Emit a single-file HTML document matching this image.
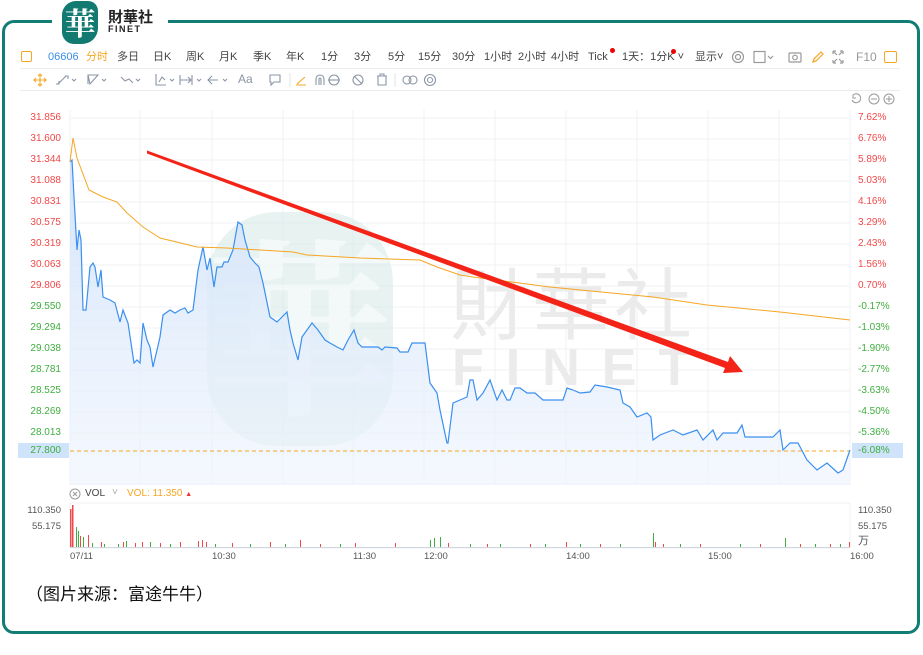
<!DOCTYPE html>
<html><head><meta charset="utf-8"><style>
*{margin:0;padding:0;box-sizing:border-box}
body{width:923px;height:655px;background:#fff;position:relative;overflow:hidden;font-family:"Liberation Sans","Noto Sans CJK SC",sans-serif}
.frame{position:absolute;left:2px;top:20px;width:918px;height:614px;border:3px solid #127d74;border-radius:12px}
.logobg{position:absolute;left:52px;top:10px;width:116px;height:20px;background:#fff}
.icon{position:absolute;left:62px;top:1px;width:36px;height:43px;background:#127a70;border-radius:14px 10px 16px 12px;color:#fff;font:bold 31px "Noto Serif CJK SC",serif;text-align:center;line-height:42px}
.lt1{position:absolute;left:108px;top:8px;font:bold 15px "Noto Sans CJK SC",sans-serif;color:#222;letter-spacing:0px;line-height:17px}
.lt2{position:absolute;left:108px;top:25px;font:bold 9px "Liberation Sans",sans-serif;color:#222;letter-spacing:1.5px;line-height:9px}
.tb{position:absolute;top:50px;font-size:11px;color:#444;white-space:nowrap;line-height:14px}
.sep{position:absolute;left:20px;height:1px;background:#e8ebef}
.lbl{position:absolute;font-size:10px;text-align:right;width:50px;line-height:12px}
.rl{position:absolute;left:858px;font-size:10px;line-height:12px}
.cap{position:absolute;left:26px;top:580px;font:17px "Noto Sans CJK SC",sans-serif;color:#111}
</style></head><body>
<div class="frame"></div>
<div class="logobg"></div>
<div class="icon">華</div>
<div class="lt1">財華社</div>
<div class="lt2">FINET</div>

<div style="position:absolute;left:21px;top:51px;width:11px;height:11px;border:1.5px solid #f5a623;border-radius:2px"></div>
<div class="tb" style="left:48px;color:#3a8ee6">06606</div>
<div class="tb" style="left:86px;color:#f5a623">分时</div>
<div class="tb" style="left:117px">多日</div>
<div class="tb" style="left:153px">日K</div>
<div class="tb" style="left:186px">周K</div>
<div class="tb" style="left:219px">月K</div>
<div class="tb" style="left:253px">季K</div>
<div class="tb" style="left:286px">年K</div>
<div class="tb" style="left:321px">1分</div>
<div class="tb" style="left:354px">3分</div>
<div class="tb" style="left:388px">5分</div>
<div class="tb" style="left:418px">15分</div>
<div class="tb" style="left:452px">30分</div>
<div class="tb" style="left:484px">1小时</div>
<div class="tb" style="left:518px">2小时</div>
<div class="tb" style="left:551px">4小时</div>
<div class="tb" style="left:588px">Tick</div>
<div style="position:absolute;left:610px;top:48px;width:5px;height:5px;border-radius:50%;background:#e00"></div>
<div class="tb" style="left:622px">1天：1分K ˅</div>
<div style="position:absolute;left:671px;top:49px;width:5px;height:5px;border-radius:50%;background:#e00"></div>
<div class="tb" style="left:695px">显示˅</div>
<svg style="position:absolute;left:730px;top:50px" width="150" height="16" fill="none" stroke="#999" stroke-width="1.2">
<circle cx="8" cy="7" r="5.5"/><circle cx="8" cy="7" r="2.5"/>
<rect x="24" y="1.5" width="11" height="11"/><path d="M38 6l2.5 2.5L43 6"/>
<rect x="59" y="3" width="12" height="9" rx="1"/><circle cx="65" cy="7.5" r="2.3"/>
<path d="M83 12l1-3 7-7 2 2-7 7z" stroke="#f5a623"/>
<path d="M103 1h3M103 1v3M113 1h-3M113 1v3M103 13h3M103 13v-3M113 13h-3M113 13v-3M104 2l3 3M112 2l-3 3M104 12l3-3M112 12l-3-3"/>
</svg>
<div class="tb" style="left:856px;color:#999;font-size:12px">F10</div>
<div style="position:absolute;left:884px;top:51px;width:13px;height:12px;border:1.5px solid #f5a623;border-radius:2px"></div>
<div class="sep" style="top:68px;width:880px"></div>

<svg style="position:absolute;left:30px;top:72px" width="420" height="16" fill="none" stroke="#8a95a5" stroke-width="1.1">
<path d="M10 2v12M4 8h12M8 4l2-2 2 2M8 12l2 2 2-2M6 6l-2 2 2 2M14 6l2 2-2 2" stroke="#f5a623"/>
<path d="M28 12l8-8M26 12h3v-3M35 4h3v3"/><path d="M42 7l2 2 2-2"/>
<path d="M58 3l10 0-8 9zM58 3v9"/><path d="M72 7l2 2 2-2"/>
<path d="M91 5l4 4 4-2 4 4"/><path d="M106 7l2 2 2-2"/>
<path d="M126 2v11h10M129 10l3-5 3 3"/><path d="M140 7l2 2 2-2"/>
<path d="M150 3v10M162 3v10M150 8h12M158 5l3 3-3 3"/><path d="M167 7l2 2 2-2"/>
<path d="M178 8h10M182 4l-4 4 4 4"/><path d="M193 7l2 2 2-2"/>
<path d="M240 3h10v7h-6l-3 3v-3h-1z"/>
<path d="M260 1v14" stroke="#e5e5e5"/>
<path d="M267 12l8-7M266 13h10" stroke="#f5a623"/>
<path d="M286 13V7a4 4 0 018 0v6M289 13V7a1 1 0 012 0v6"/>
<circle cx="304" cy="8" r="5"/><path d="M298 8h12"/>
<circle cx="328" cy="8" r="5"/><path d="M324 4l8 8"/>
<path d="M347 4h10M350 4V2h4v2M348 4v9h8V4"/>
<path d="M365 1v14" stroke="#e5e5e5"/>
<circle cx="377" cy="8" r="4"/><circle cx="383" cy="8" r="4"/>
<circle cx="400" cy="8" r="5.5"/><circle cx="400" cy="8" r="2.5"/>
</svg>
<div style="position:absolute;left:238px;top:72px;font-size:12px;color:#8a95a5">Aa</div>
<div class="sep" style="top:90px;width:880px"></div>
<svg style="position:absolute;left:850px;top:92px" width="50" height="14" fill="none" stroke="#999" stroke-width="1">
<path d="M3 3a4.5 4.5 0 11-1 5M3 3v3h3"/>
<circle cx="24" cy="7" r="5"/><path d="M21 7h6"/>
<circle cx="39" cy="7" r="5"/><path d="M36 7h6M39 4v6"/>
</svg>

<div class="lbl" style="left:11px;top:112px;color:#f04848">31.856</div>
<div class="lbl" style="left:11px;top:133px;color:#f04848">31.600</div>
<div class="lbl" style="left:11px;top:154px;color:#f04848">31.344</div>
<div class="lbl" style="left:11px;top:175px;color:#f04848">31.088</div>
<div class="lbl" style="left:11px;top:196px;color:#f04848">30.831</div>
<div class="lbl" style="left:11px;top:217px;color:#f04848">30.575</div>
<div class="lbl" style="left:11px;top:238px;color:#f04848">30.319</div>
<div class="lbl" style="left:11px;top:259px;color:#f04848">30.063</div>
<div class="lbl" style="left:11px;top:280px;color:#f04848">29.806</div>
<div class="lbl" style="left:11px;top:301px;color:#3fae3f">29.550</div>
<div class="lbl" style="left:11px;top:322px;color:#3fae3f">29.294</div>
<div class="lbl" style="left:11px;top:343px;color:#3fae3f">29.038</div>
<div class="lbl" style="left:11px;top:364px;color:#3fae3f">28.781</div>
<div class="lbl" style="left:11px;top:385px;color:#3fae3f">28.525</div>
<div class="lbl" style="left:11px;top:406px;color:#3fae3f">28.269</div>
<div class="lbl" style="left:11px;top:427px;color:#3fae3f">28.013</div>
<div style="position:absolute;left:18px;top:443px;width:51px;height:15px;background:#cfe3fb"></div>
<div class="lbl" style="left:11px;top:445px;color:#3fae3f">27.800</div>
<div class="rl" style="top:112px;color:#f04848">7.62%</div>
<div class="rl" style="top:133px;color:#f04848">6.76%</div>
<div class="rl" style="top:154px;color:#f04848">5.89%</div>
<div class="rl" style="top:175px;color:#f04848">5.03%</div>
<div class="rl" style="top:196px;color:#f04848">4.16%</div>
<div class="rl" style="top:217px;color:#f04848">3.29%</div>
<div class="rl" style="top:238px;color:#f04848">2.43%</div>
<div class="rl" style="top:259px;color:#f04848">1.56%</div>
<div class="rl" style="top:280px;color:#f04848">0.70%</div>
<div class="rl" style="top:301px;color:#3fae3f">-0.17%</div>
<div class="rl" style="top:322px;color:#3fae3f">-1.03%</div>
<div class="rl" style="top:343px;color:#3fae3f">-1.90%</div>
<div class="rl" style="top:364px;color:#3fae3f">-2.77%</div>
<div class="rl" style="top:385px;color:#3fae3f">-3.63%</div>
<div class="rl" style="top:406px;color:#3fae3f">-4.50%</div>
<div class="rl" style="top:427px;color:#3fae3f">-5.36%</div>
<div style="position:absolute;left:852px;top:443px;width:51px;height:15px;background:#cfe3fb"></div>
<div class="rl" style="top:445px;color:#3fae3f">-6.08%</div>

<svg style="position:absolute;left:0;top:0" width="923" height="655">
<defs><linearGradient id="g" x1="0" y1="0" x2="0" y2="1"><stop offset="0" stop-color="#cfe1fa" stop-opacity=".9"/><stop offset="1" stop-color="#eef4fd" stop-opacity=".6"/></linearGradient></defs>
<g stroke="#eef1f5" stroke-width="1">
<path d="M70 118H850M70 139H850M70 160H850M70 181H850M70 202H850M70 223H850M70 244H850M70 265H850M70 286H850M70 307H850M70 328H850M70 349H850M70 370H850M70 391H850M70 412H850M70 433H850M70 484H850"/>
<path d="M70 110V485M140 110V485M212 110V485M283 110V485M353 110V485M424 110V485M495 110V485M566 110V485M637 110V485M708 110V485M779 110V485M850 110V485"/>
<path d="M70 503H850M70 548H850M70 503V548M850 503V548"/>
</g>
<rect x="207" y="212" width="186" height="234" rx="70" fill="#d5e9e6" opacity=".55"/>
<text x="300" y="400" font-size="190" font-family="Noto Serif CJK SC,serif" font-weight="bold" fill="#fff" opacity=".5" text-anchor="middle">華</text>
<text x="450" y="333" font-size="78" font-family="Noto Sans CJK SC,sans-serif" fill="#ebebeb" letter-spacing="4">財華社</text>
<text x="452" y="385" font-size="52" font-family="Liberation Sans,sans-serif" font-weight="bold" fill="#ebebeb" letter-spacing="22">FINET</text>
<path fill="url(#g)" d="M70 162L72 160L74 197L77 250L79 230L81 240L83 310L86 310L90 267L93 263L95 267L98 287L101 270L103 297L110 300L115 303L120 322L123 310L128 323L134 363L137 360L140 363L143 323L147 340L150 347L153 367L157 350L160 337L163 315L170 310L175 313L180 310L185 308L188 313L193 310L198 270L203 247L207 270L210 258L214 287L217 267L222 267L224 262L228 262L233 250L238 222L242 225L245 240L250 257L255 263L259 267L263 283L270 317L277 322L282 317L287 312L290 330L293 343L298 360L302 337L307 330L312 323L318 330L325 340L330 343L337 347L343 350L348 340L354 330L358 343L362 347L378 347L382 350L385 347L397 348L400 352L408 352L412 343L425 343L430 383L437 393L440 410L447 443L448 443L453 403L460 400L467 397L470 380L473 380L477 400L483 393L490 380L497 400L502 390L507 400L510 400L515 388L520 388L527 393L535 393L543 400L563 400L567 388L573 390L580 393L590 392L595 385L607 387L620 390L623 403L630 407L637 417L647 413L651 417L653 440L660 435L673 430L683 435L697 430L703 440L713 430L717 440L723 433L737 433L742 425L745 437L773 437L780 430L783 450L790 443L798 443L807 460L817 470L827 463L838 473L843 470L850 450L850 485L70 485Z"/>
<path fill="none" stroke="#f5a623" stroke-width="1" stroke-dasharray="4 3" d="M70 451H850"/>
<path fill="none" stroke="#3b8ff0" stroke-width="1.2" d="M70 162L72 160L74 197L77 250L79 230L81 240L83 310L86 310L90 267L93 263L95 267L98 287L101 270L103 297L110 300L115 303L120 322L123 310L128 323L134 363L137 360L140 363L143 323L147 340L150 347L153 367L157 350L160 337L163 315L170 310L175 313L180 310L185 308L188 313L193 310L198 270L203 247L207 270L210 258L214 287L217 267L222 267L224 262L228 262L233 250L238 222L242 225L245 240L250 257L255 263L259 267L263 283L270 317L277 322L282 317L287 312L290 330L293 343L298 360L302 337L307 330L312 323L318 330L325 340L330 343L337 347L343 350L348 340L354 330L358 343L362 347L378 347L382 350L385 347L397 348L400 352L408 352L412 343L425 343L430 383L437 393L440 410L447 443L448 443L453 403L460 400L467 397L470 380L473 380L477 400L483 393L490 380L497 400L502 390L507 400L510 400L515 388L520 388L527 393L535 393L543 400L563 400L567 388L573 390L580 393L590 392L595 385L607 387L620 390L623 403L630 407L637 417L647 413L651 417L653 440L660 435L673 430L683 435L697 430L703 440L713 430L717 440L723 433L737 433L742 425L745 437L773 437L780 430L783 450L790 443L798 443L807 460L817 470L827 463L838 473L843 470L850 450"/>
<path fill="none" stroke="#f5a623" stroke-width="1" d="M70 162L73 138L77 158L89 190L103 197L117 202L127 213L143 227L160 238L197 247L227 248L293 252L307 255L360 258L420 260L437 267L460 275L473 277L550 287L653 297L707 305L780 312L850 320"/>
<polygon fill="#f42317" points="147,150.5 147,153.5 725,368 723,373 743,372 730,356 728,362"/>
<g fill="#f04848">
<rect x="70" y="509" width="1.5" height="39"/><rect x="72" y="505" width="1.5" height="43"/><rect x="80" y="536" width="1" height="12"/><rect x="88" y="535" width="1" height="13"/><rect x="101" y="542" width="1" height="6"/><rect x="123" y="542" width="1" height="6"/><rect x="135" y="543" width="1" height="5"/><rect x="142" y="542" width="1" height="6"/><rect x="160" y="543" width="1" height="5"/><rect x="180" y="542" width="1" height="6"/><rect x="198" y="541" width="1" height="7"/><rect x="202" y="540" width="1" height="8"/><rect x="206" y="542" width="1" height="6"/><rect x="232" y="543" width="1" height="5"/><rect x="270" y="542" width="1" height="6"/><rect x="300" y="540" width="1" height="8"/><rect x="320" y="544" width="1" height="4"/><rect x="355" y="543" width="1" height="5"/><rect x="395" y="543" width="1" height="5"/><rect x="448" y="543" width="1" height="5"/><rect x="487" y="544" width="1" height="4"/><rect x="530" y="544" width="1" height="4"/><rect x="566" y="542" width="1" height="6"/><rect x="600" y="544" width="1" height="4"/><rect x="655" y="542" width="1" height="6"/><rect x="663" y="544" width="1" height="4"/><rect x="700" y="544" width="1" height="4"/><rect x="760" y="544" width="1" height="4"/><rect x="800" y="544" width="1" height="4"/><rect x="830" y="544" width="1" height="4"/><rect x="849" y="542" width="1" height="6"/>
</g>
<g fill="#3fae3f">
<rect x="76" y="527" width="1" height="21"/><rect x="78" y="531" width="1" height="17"/><rect x="83" y="537" width="1" height="11"/><rect x="92" y="543" width="1" height="5"/><rect x="104" y="544" width="1" height="4"/><rect x="118" y="544" width="1" height="4"/><rect x="126" y="541" width="1" height="7"/><rect x="150" y="542" width="1" height="6"/><rect x="170" y="544" width="1" height="4"/><rect x="215" y="544" width="1" height="4"/><rect x="250" y="544" width="1" height="4"/><rect x="285" y="544" width="1" height="4"/><rect x="340" y="544" width="1" height="4"/><rect x="430" y="540" width="1" height="8"/><rect x="434" y="538" width="1" height="10"/><rect x="440" y="537" width="1" height="11"/><rect x="470" y="544" width="1" height="4"/><rect x="500" y="544" width="1" height="4"/><rect x="545" y="544" width="1" height="4"/><rect x="580" y="544" width="1" height="4"/><rect x="620" y="544" width="1" height="4"/><rect x="653" y="533" width="1" height="15"/><rect x="680" y="544" width="1" height="4"/><rect x="740" y="544" width="1" height="4"/><rect x="785" y="538" width="1" height="10"/><rect x="815" y="544" width="1" height="4"/><rect x="840" y="544" width="1" height="4"/>
</g>
<path d="M70 547.5H850" stroke="#cfd6df" stroke-width="1"/>
</svg>

<svg style="position:absolute;left:69px;top:488px" width="12" height="12" fill="none" stroke="#999"><circle cx="6" cy="6" r="5"/><path d="M4 4l4 4M8 4l-4 4"/></svg>
<div style="position:absolute;left:85px;top:488px;font-size:10px;color:#444">VOL</div>
<div style="position:absolute;left:112px;top:487px;font-size:10px;color:#aaa">˅</div>
<div style="position:absolute;left:127px;top:488px;font-size:10px;color:#f5a623">VOL: 11.350 <span style="color:#e33;font-size:7px">▲</span></div>
<div class="lbl" style="left:11px;top:505px;color:#555;font-size:9.5px">110.350</div>
<div class="lbl" style="left:11px;top:521px;color:#555;font-size:9.5px">55.175</div>
<div class="rl" style="top:505px;color:#555;font-size:9.5px">110.350</div>
<div class="rl" style="top:521px;color:#555;font-size:9.5px">55.175</div>
<div class="rl" style="top:535px;color:#555;font-size:11px">万</div>
<div style="position:absolute;top:551px;font-size:9.5px;color:#555;width:923px">
<span style="position:absolute;left:70px">07/11</span><span style="position:absolute;left:212px">10:30</span><span style="position:absolute;left:353px">11:30</span><span style="position:absolute;left:424px">12:00</span><span style="position:absolute;left:566px">14:00</span><span style="position:absolute;left:708px">15:00</span><span style="position:absolute;left:850px">16:00</span></div>
<div class="cap">（图片来源：富途牛牛）</div>
</body></html>
